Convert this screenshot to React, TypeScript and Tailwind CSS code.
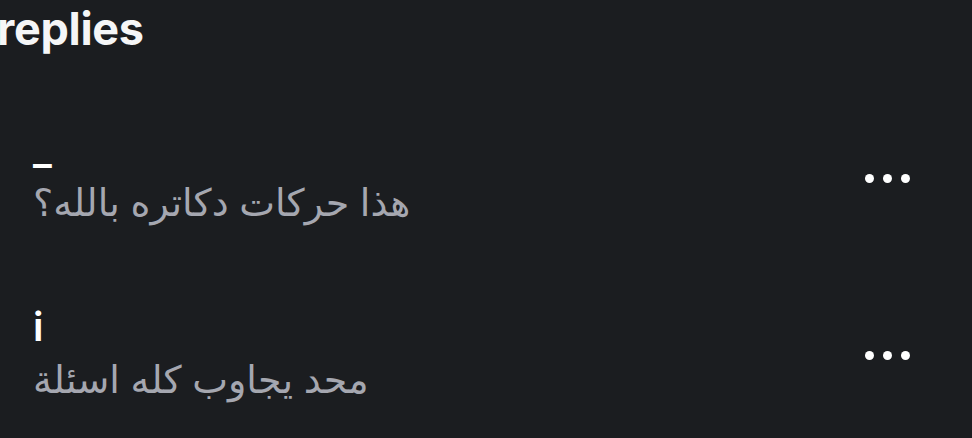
import React from "react";

type Reply = { name: string; text: string };

const replies: Reply[] = [
  { name: "_", text: "هذا حركات دكاتره بالله؟" },
  { name: "i", text: "محد يجاوب كله اسئلة" },
];

function Dots() {
  return (
    <div className="flex items-center gap-[9px]">
      <span className="block h-[9px] w-[9px] rounded-full bg-white" />
      <span className="block h-[9px] w-[9px] rounded-full bg-white" />
      <span className="block h-[9px] w-[9px] rounded-full bg-white" />
    </div>
  );
}

export default function App() {
  return (
    <div
      className="h-[438px] w-[972px] overflow-hidden bg-[#1b1d20] text-white"
      style={{ fontFamily: "Inter, 'Noto Sans', 'DejaVu Sans', sans-serif" }}
    >
      <h1 className="ml-[-3px] pt-[1px] text-[45px] font-bold leading-[56px] tracking-[-0.3px] text-[#f5f6f7]">
        replies
      </h1>
      <div className="mt-[73px] flex flex-col gap-[81px] pl-[33px] pr-[62px]">
        {replies.map((r) => (
          <div key={r.name} className="flex items-center justify-between">
            <div className="flex flex-col">
              <span className="text-[40px] font-semibold leading-[40px] text-white">{r.name}</span>
              <span
                dir="auto"
                className="mt-[9px] text-left text-[38px] leading-[47px] text-[#a5a7b0]"
              >
                {r.text}
              </span>
            </div>
            <Dots />
          </div>
        ))}
      </div>
    </div>
  );
}
